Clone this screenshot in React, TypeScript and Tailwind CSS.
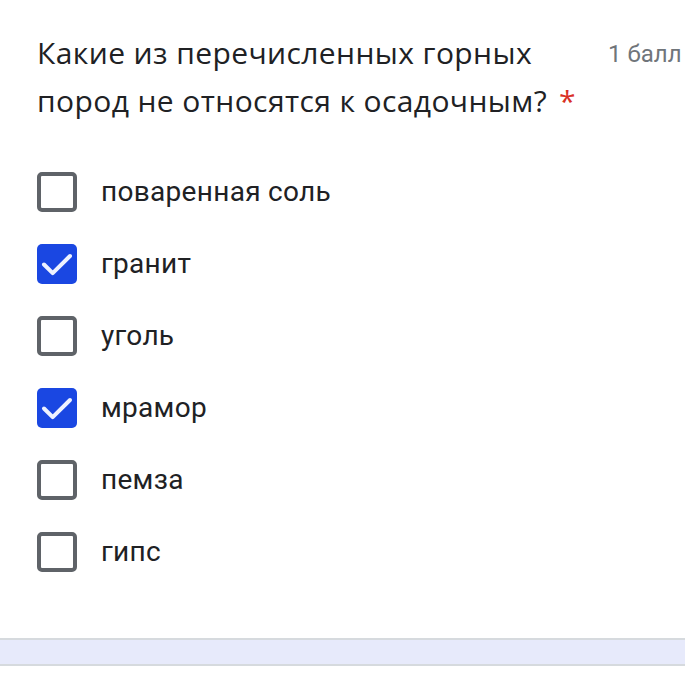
const options = [
  { label: "поваренная соль", checked: false },
  { label: "гранит", checked: true },
  { label: "уголь", checked: false },
  { label: "мрамор", checked: true },
  { label: "пемза", checked: false },
  { label: "гипс", checked: false },
];

const Checkbox = ({ checked }: { checked: boolean }) =>
  checked ? (
    <div className="flex h-[40px] w-[40px] shrink-0 items-center justify-center rounded-[5px] bg-[#1a47e2]">
      <svg width="40" height="40" viewBox="0 0 40 40" fill="none">
        <path d="M7 20.5l8.7 8.7L33 12" stroke="#eef2ff" strokeWidth="4" strokeLinecap="round" strokeLinejoin="round" />
      </svg>
    </div>
  ) : (
    <div className="h-[40px] w-[40px] shrink-0 rounded-[5px] border-[4px] border-[#5f6368] bg-white" />
  );

export default function App() {
  return (
    <div className="flex h-[684px] w-[685px] flex-col overflow-hidden bg-white">
      <div className="flex flex-col pl-[37px] pt-[29px]">
        <div className="flex items-start">
          <h2 className="w-[571px] shrink-0 font-['Open_Sans',sans-serif] text-[30px] leading-[48px] tracking-[0.4px] text-[#202124]">
            Какие из перечисленных горных
            <br />
            пород не относятся к осадочным?<span className="ml-[12px] text-[#d93025]">*</span>
          </h2>
          <span className="shrink-0 whitespace-nowrap pt-[7px] font-['Roboto',sans-serif] text-[24px] text-[#70757a]">1 балл</span>
        </div>

        <ul className="mt-[47px] flex flex-col gap-[32px]">
          {options.map((o) => (
            <li key={o.label} className="flex items-center gap-[24px]">
              <Checkbox checked={o.checked} />
              <span className="font-['Roboto',sans-serif] text-[28px] leading-[40px] tracking-[0.3px] text-[#202124]">{o.label}</span>
            </li>
          ))}
        </ul>
      </div>

      <div className="mt-auto mb-[18px] h-[28px] border-y-[2px] border-[#d6dade] bg-[#e7eafb]" />
    </div>
  );
}
